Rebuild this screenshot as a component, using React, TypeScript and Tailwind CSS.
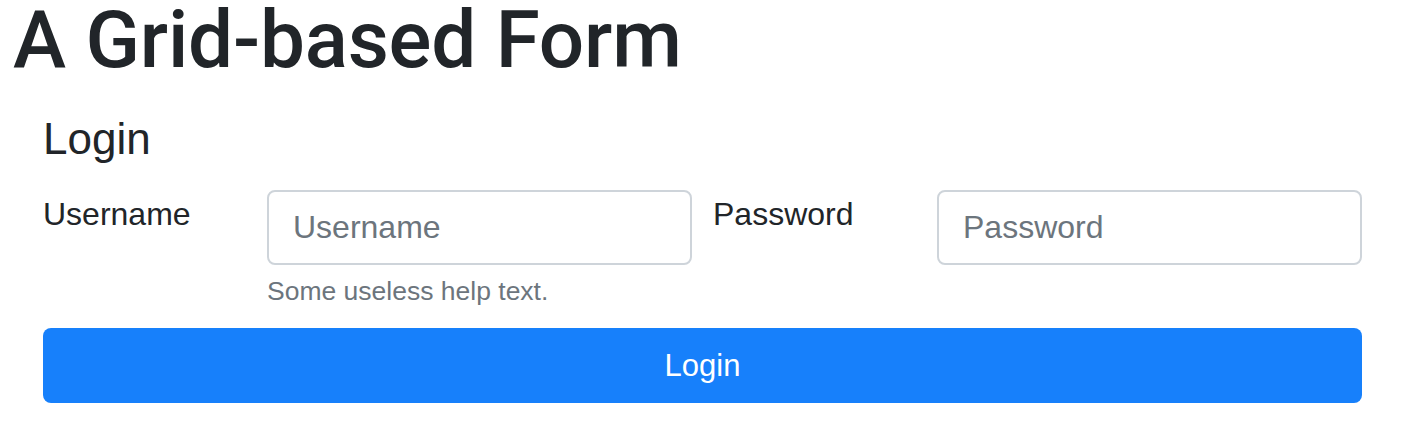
import React from "react";

export default function App() {
  return (
    <div
      className="w-[1402px] h-[422px] bg-white overflow-hidden text-[#212529]"
      style={{ fontFamily: '"Liberation Sans", Arial, sans-serif' }}
    >
      <h1
        className="pl-[13px] text-[80px] leading-[80px] font-medium tracking-[-0.2px] text-[#212529]"
        style={{ fontFamily: 'Roboto, "Liberation Sans", Arial, sans-serif' }}
      >
        A Grid-based Form
      </h1>
      <form className="ml-[43px] w-[1319px]" onSubmit={(e) => e.preventDefault()}>
        <div className="mt-[37px] text-[44px] leading-[44px] text-[#212529]">Login</div>
        <div className="mt-[29px] flex items-start">
          <label htmlFor="username" className="w-[224px] text-[32px] leading-[48px]">
            Username
          </label>
          <div className="w-[425px] flex flex-col">
            <input
              id="username"
              type="text"
              placeholder="Username"
              className="h-[75px] w-full rounded-[8px] border-2 border-[#ced4da] bg-white px-[24px] text-[32px] leading-[48px] text-[#495057] placeholder:text-[#6c757d] outline-none"
            />
            <small className="mt-[7px] text-[26.5px] leading-[39px] text-[#6c757d]">
              Some useless help text.
            </small>
          </div>
          <label htmlFor="password" className="ml-[21px] w-[224px] text-[32px] leading-[48px]">
            Password
          </label>
          <div className="w-[425px]">
            <input
              id="password"
              type="password"
              placeholder="Password"
              className="h-[75px] w-full rounded-[8px] border-2 border-[#ced4da] bg-white px-[24px] text-[32px] leading-[48px] text-[#495057] placeholder:text-[#6c757d] outline-none"
            />
          </div>
        </div>
        <button
          type="submit"
          className="mt-[17px] flex h-[75px] w-full items-center justify-center rounded-[8px] bg-[#1780fb] text-[31px] leading-[48px] text-white"
        >
          Login
        </button>
      </form>
    </div>
  );
}
